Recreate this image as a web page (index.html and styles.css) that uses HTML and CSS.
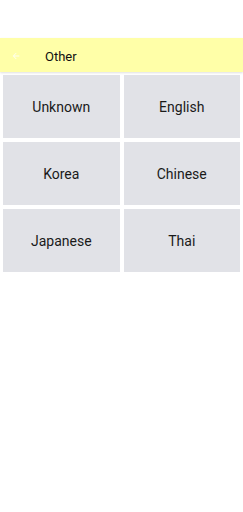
FILE: index.html
```html
<!DOCTYPE html>
<html lang="en">
<head>
    <meta charset="UTF-8">
    <meta name="viewport" content="width=device-width, initial-scale=1.0">
    <title>Other</title>
    <link rel="stylesheet" href="styles.css">
</head>
<body>
    <div class="status-bar"></div>
    <header class="app-bar">
        <span class="back">
            <svg width="10" height="10" viewBox="0 0 24 24"><path d="M20 11H7.8l5.6-5.6L12 4l-8 8 8 8 1.4-1.4L7.8 13H20z" fill="#ffffff"/></svg>
        </span>
        <h1 class="title">Other</h1>
    </header>
    <div class="grid">
        <div class="tile">Unknown</div>
        <div class="tile">English</div>
        <div class="tile">Korea</div>
        <div class="tile">Chinese</div>
        <div class="tile">Japanese</div>
        <div class="tile">Thai</div>
    </div>
</body>
</html>
```

FILE: styles.css
```css
body { margin: 0; padding: 0; background: #fff; font-family: Roboto, "Noto Sans", sans-serif; }
.status-bar { height: 38px; }
.app-bar {
    height: 34px;
    background: #ffffa8;
    display: flex;
    align-items: center;
    box-shadow: 0 1px 2px rgba(0, 0, 0, 0.12);
}
.back { width: 45px; display: flex; justify-content: center; padding: 2px 13px 0 0; box-sizing: border-box; opacity: 0.8; }
.back svg { display: block; }
.title { margin: 0; padding-top: 2px; font-size: 13px; font-weight: 400; color: #111; }
.grid {
    display: grid;
    grid-template-columns: 1fr 1fr;
    grid-auto-rows: 63px;
    gap: 4px;
    padding: 3px;
}
.tile {
    background: #e1e2e7;
    display: flex;
    align-items: center;
    justify-content: center;
    font-size: 14px;
    color: #1a1a1a;
}
```
